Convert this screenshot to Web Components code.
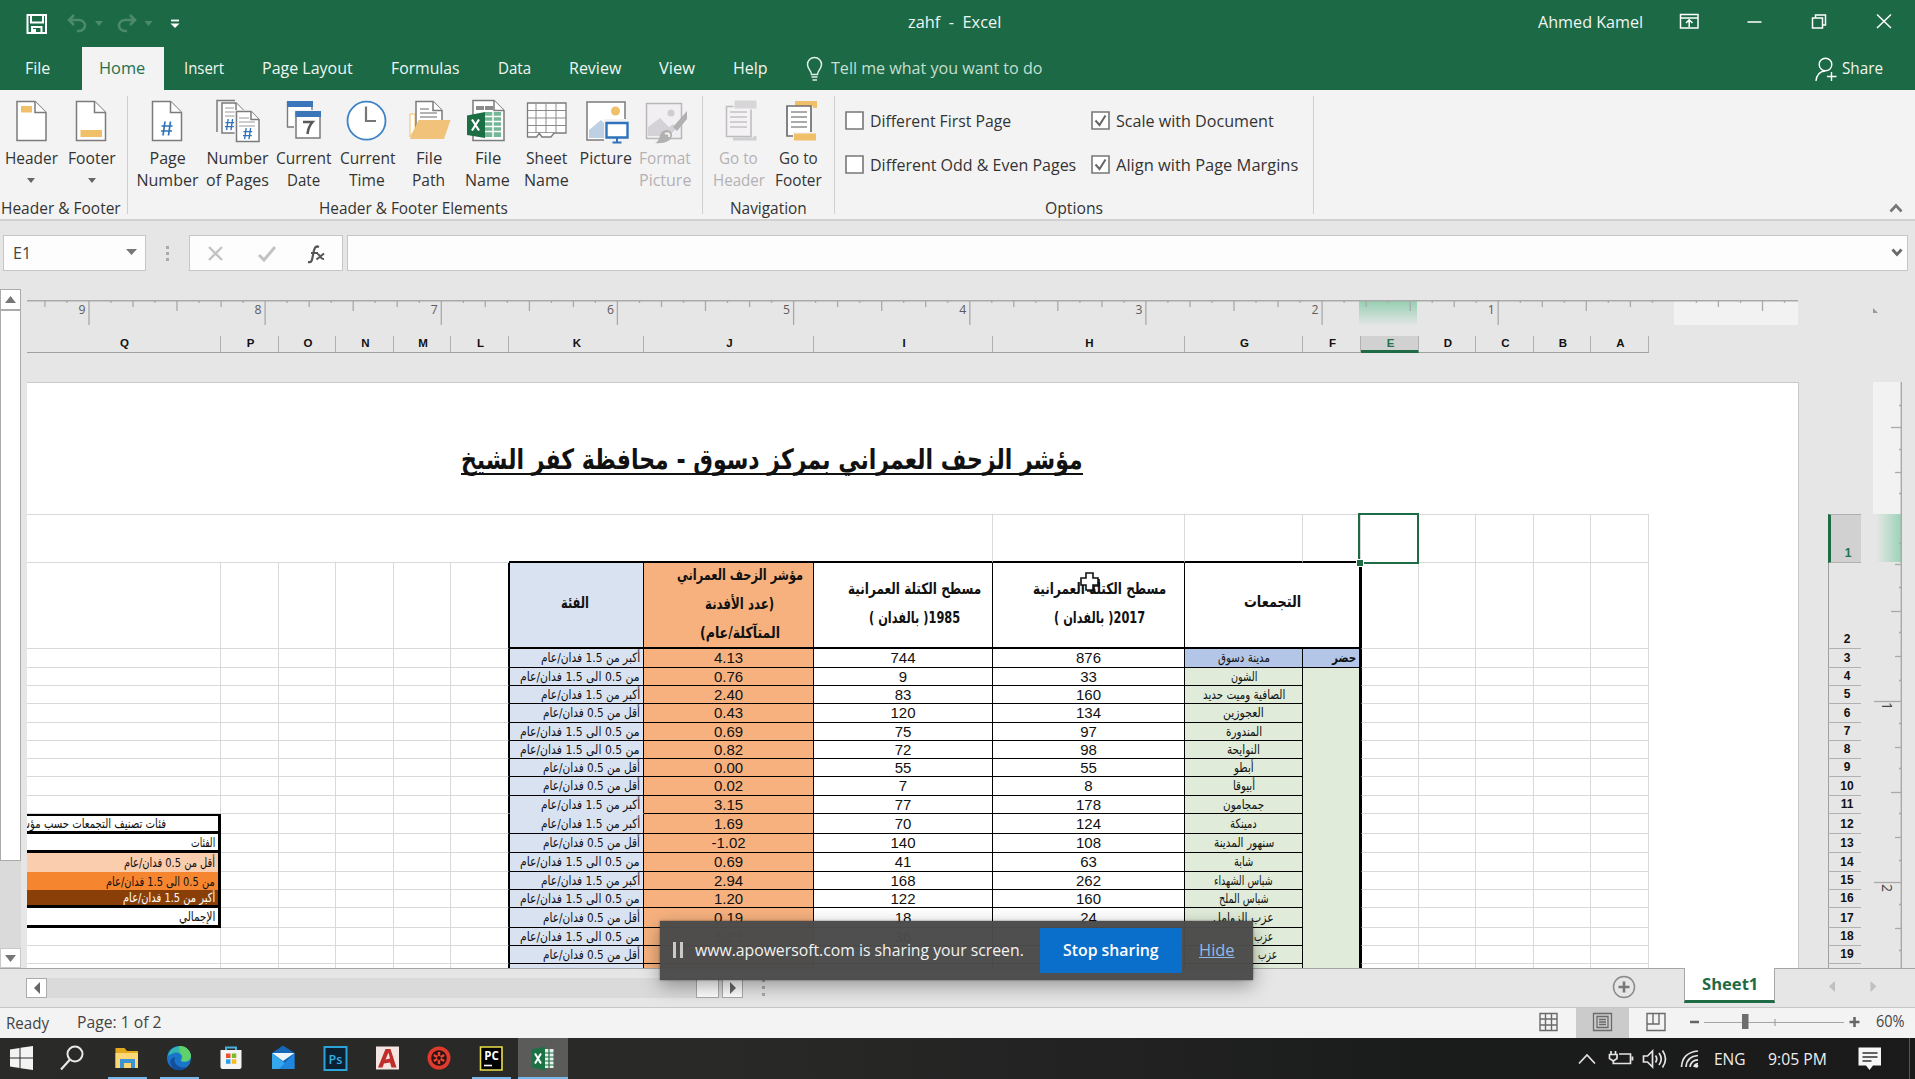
<!DOCTYPE html>
<html lang="en">
<head>
<meta charset="utf-8">
<title>zahf - Excel</title>
<style>
html,body{margin:0;padding:0;width:1915px;height:1079px;overflow:hidden;background:#e6e6e6}
body{font-family:"Open Sans","Noto Sans",sans-serif;font-size:16px;color:#333}
</style>
</head>
<body>
<excel-app></excel-app>
<script>
const define = (name, html) => customElements.define(name, class extends HTMLElement {
  constructor(){ super(); this.attachShadow({mode:'open'}); }
  connectedCallback(){ this.shadowRoot.innerHTML = typeof html === 'function' ? html(this) : html; }
});
const t = (text, w, style='') => `<fit-text w="${w}" style="${style}">${text}</fit-text>`;
const ar = (text, w, style='') => `<fit-text rtl w="${w}" style="${style}">${text}</fit-text>`;

/* text squeezed or stretched to a given advance width */
customElements.define('fit-text', class extends HTMLElement {
  constructor(){
    super();
    this.attachShadow({mode:'open'}).innerHTML = `<style>
      :host{display:inline-block;flex:none;white-space:pre;text-align:left;direction:ltr}
      span{display:inline-block;transform-origin:0 0;text-decoration:inherit}
    </style><span><slot></slot></span>`;
  }
  connectedCallback(){
    const s = this.shadowRoot.querySelector('span'), w = +this.getAttribute('w');
    if (this.hasAttribute('rtl')) s.dir = 'rtl';
    this.style.width = w + 'px';
    const n = s.offsetWidth;
    if (n) s.style.transform = `scaleX(${w / n})`;
  }
});

define('title-bar', `<style>
  :host{display:flex;height:43px;padding-bottom:4px;background:#1c6946;align-items:center;color:#eef5f1}
  svg{flex:none;display:block}
</style>
<svg width="200" height="43" fill="none" stroke="#fff" stroke-width="2">
  <path d="M27.500 15h18.500v18h-18.500z M31 15v7.500h12V15 M32 33v-6h9.500v6"/><path d="M34.500 29v4" stroke-width="3"/>
  <g stroke="#4b8a6b" stroke-width="2.600"><path d="M74 15l-5 5 5 5 M70 20h9a6 5.500 0 0 1 0 11h-2"/><path d="M130 15l5 5-5 5 M134 20h-9a6 5.500 0 0 0 0 11h2"/></g>
  <path d="M95 21h8l-4 5z M144.500 21h8l-4 5z" fill="#4b8a6b" stroke="none"/>
  <path d="M171 20.500h8" stroke-width="1.800"/><path d="M170.500 23.500h9l-4.500 4.500z" fill="#fff" stroke="none"/>
</svg>
${t('zahf  -  Excel',93,'margin-left:708px')}
${t('Ahmed Kamel',105,'margin-left:537px')}
<svg width="272" height="43" fill="none" stroke="#fff" stroke-width="1.500">
  <path d="M37.500 14.500h17.500v13.500h-17.500z M37.500 18h17.500 M46.200 27v-7 M43 23l3.200-3.200L49.500 23"/>
  <path d="M104.500 22h14"/><path d="M169.500 18h10v10h-10z M172.500 18v-3h10v10h-3"/>
  <path d="M234 14.500l14 13.500 M248 14.500l-14 13.500"/>
</svg>`);

define('tab-bar', `<style>
  :host{display:flex;height:43px;background:#1c6946;color:#f0f6f2;align-items:center;line-height:20px}
  fit-text{margin-bottom:1px}
  .on{background:#f3f3f3;color:#24714c;height:43px;display:flex;align-items:center;padding:0 19px 0 17px;margin-left:32px}
  svg{display:block;flex:none}
</style>
${t('File',25,'margin-left:25px')}
<div class="on">${t('Home',46)}</div>
${t('Insert',40,'margin-left:20px')}
${t('Page Layout',91,'margin-left:38px')}
${t('Formulas',69,'margin-left:38px')}
${t('Data',33,'margin-left:38px')}
${t('Review',52,'margin-left:38px')}
${t('View',36,'margin-left:38px')}
${t('Help',35,'margin-left:38px')}
<svg width="18" height="26" viewBox="0 0 18 26" style="margin-left:38px" fill="none" stroke="#e3efe8" stroke-width="1.500"><path d="M5.500 18.500c0-4-4-5.500-4-10a7 7 0 0 1 14 0c0 4.500-4 6-4 10z M5.500 21h6 M6.500 24h4.500"/></svg>
${t('Tell me what you want to do',211,'margin-left:7px;color:#c5dfd1')}
<svg width="24" height="26" viewBox="0 0 24 26" style="margin-left:772px" fill="none" stroke="#fff" stroke-width="1.400"><circle cx="11.500" cy="8.500" r="6.300"/><path d="M2 25c.5-6 4-9.500 9-10 M17.500 16v9 M13 20.500h9.500"/></svg>
${t('Share',41,'margin-left:4px')}`);

const docPath = (x,y,w,h,f=11) => `<path d="M${x} ${y}h${w-f}l${f} ${f}v${h-f}h-${w}z" fill="#fff" stroke="#7b7b7b" stroke-width="1.500"/><path d="M${x+w-f} ${y}v${f}h${f}" fill="#fff" stroke="#7b7b7b" stroke-width="1.500"/>`;
const hash = (x,y,s) => `<g transform="translate(${x} ${y}) scale(${s})" stroke="#2f73bb" stroke-width="1.700" fill="none"><path d="M4 0L2 14 M9.500 0L7.500 14 M.5 4.500h11 M0 9.500h11"/></g>`;
const icons = {
  header: docPath(8,2.500,29,39) + '<path d="M12 7h11v6.500H12z" fill="#f0c068"/>',
  footer: docPath(6.500,2.500,29,39) + '<path d="M10.500 31h21.500v7H10.500z" fill="#f0c068"/>',
  page: docPath(6.500,2.500,29,39) + hash(15,22.500,1),
  pages: '<path d="M1 33V1.500h18" fill="none" stroke="#7b7b7b" stroke-width="1.500"/>' + docPath(6,4,22,30,8) + '<path d="M9 9h9 M9 13h12 M9 17h12" stroke="#9a9a9a"/>' + hash(9,20,.8) + '<path d="M18.500 11h18l8 9v24h-26z" fill="#f3f3f3"/>' + docPath(20.500,12.500,22.500,30,8) + '<path d="M23 19h10 M23 23h16 M23 27h16" stroke="#9a9a9a"/>' + hash(27,29,.8),
  date: '<path d="M5.500 3h24.500v25H5.500z" fill="#fff" stroke="#7b7b7b" stroke-width="1.400"/><path d="M5 2h26v6H5z" fill="#3b76bb"/><path d="M12 11h28v30H12z" fill="#f3f3f3"/><path d="M14 13h24v26H14z" fill="#fff" stroke="#7b7b7b" stroke-width="1.500"/><path d="M13.500 12h25.500v6H13.500z" fill="#3b76bb"/><path d="M21 23h9.500c-3.500 4-4.500 7-5 12" fill="none" stroke="#595959" stroke-width="2.600"/>',
  time: '<circle cx="21.500" cy="21.700" r="19" fill="#fff" stroke="#3f83c7" stroke-width="1.800"/><path d="M21 7.500v14.500h10" fill="none" stroke="#777" stroke-width="2.200"/>',
  path: '<path d="M3 38V15h5v15z" fill="#fff" stroke="#f0c068"/>' + docPath(9,2.500,26,30,9) + '<path d="M13 10h9 M13 14h17 M13 18h17" stroke="#9a9a9a" stroke-width="1.300"/><path d="M11.500 21H43.500L37 40H3z" fill="#f0c27a"/>',
  fname: docPath(7,1.500,31,40,10) + '<path d="M10 7h8v4h-8z M19 7h8v4h-8z" fill="#8b8b8b"/><path d="M19 13h16v25H19z" fill="#74b695"/><path d="M19 17.500h16 M19 22.500h16 M19 27.500h16 M19 32.500h16 M27 12v27" stroke="#fff" stroke-width="1.500"/><path d="M1 16.500L19 13v26L1 36z" fill="#1c6e45"/><path d="M6 20.500l7 11 M13 20.500l-7 11" stroke="#fff" stroke-width="2.200"/>',
  sheet: '<path d="M2.500 4h38.500v30H2.500z" fill="#fff" stroke="#7b7b7b" stroke-width="1.300"/><path d="M2.500 11.500H41 M2.500 19H41 M2.500 26.500H41 M11 4v30 M21 4v30 M31 4v30" stroke="#8b8b8b" fill="none"/><path d="M2.500 34v4h9l3-4 M14 34l3 4h9l3-4" fill="#fff" stroke="#7b7b7b" stroke-width="1.300"/>',
  pict: '<path d="M3 3h38v38H3z" fill="#fff" stroke="#7b7b7b" stroke-width="1.500"/><circle cx="31.500" cy="12" r="4.500" fill="#f0c068"/><path d="M5 39V31L17 21l9 9v9z" fill="#bdd0e4"/><path d="M20 20h26v26H20z" fill="#f3f3f3"/><path d="M22.500 24h21v14.500h-21z" fill="#fff" stroke="#2f73bb" stroke-width="2.400"/><path d="M33 38.500v5 M28.500 43.500h9" stroke="#2f73bb" stroke-width="2"/>',
  fmt: '<path d="M3.500 4.500h35v35h-35z" fill="#f1eff2" stroke="#b9b7ba" stroke-width="1.500"/><circle cx="28" cy="14" r="3.500" fill="#cfcdd0"/><path d="M5 37V28l12-9 9 9 4-3 4 4-8 8z" fill="#d4d2d6"/><path d="M44 12v8L34 32l-4-4z" fill="#b1b1b1"/><path d="M12 44c4-1 4-6 6-10 4-5 11-3 11 2 0 6-8 9-17 8z" fill="#b1b1b1"/><path d="M22 35c3-2 5 0 4 3" stroke="#f3f3f3" stroke-width="2" fill="none"/>',
  goh: '<path d="M16 40h22V37" stroke="#d0ced1" stroke-width="3" fill="none"/><path d="M9.500 7.500H34v30H9.500z" fill="#f4f2f5" stroke="#bdbbbe" stroke-width="1.500"/><path d="M17 1h23v9H17z" fill="#d8d6d9" stroke="#f3f3f3"/><path d="M13 13h17 M13 18h17 M13 23h17 M13 28h17" stroke="#c4c2c5" stroke-width="1.300"/>',
  gof: '<path d="M18 2h22v7h-4v-2H18z" fill="#f0c068"/><path d="M10 7h24v30H10z" fill="#fff" stroke="#6e6e6e" stroke-width="1.700"/><path d="M14 13h16 M14 18h16 M14 23h16 M14 28h16" stroke="#8f8f8f" stroke-width="1.300"/><path d="M16 33h24v9H16z" fill="#f3f3f3"/><path d="M17 34.500h22v7H17z" fill="#f0c068"/>'
};
define('ribbon-button', el => `<style>
  :host{display:flex;flex-direction:column;align-items:center;box-sizing:border-box;padding-top:9px;flex:none;line-height:22.700px;color:#333}
  :host([off]){color:#b3b1b4}
  svg{display:block;overflow:visible;margin-bottom:3.500px;flex:none}
  .a{width:0;height:0;border:4.500px solid transparent;border-top:5px solid #666;margin-top:9px}
</style><svg width="44" height="44" fill="none">${icons[el.getAttribute('icon')]}</svg><slot></slot>${el.hasAttribute('menu')?'<i class="a"></i>':''}`);
define('check-box', el => `<style>
  :host{display:flex;align-items:center;height:19px;gap:6px}
  svg{display:block;flex:none}
</style><svg width="19" height="19" fill="none"><path d="M1 1h17v17H1z" fill="#fff" stroke="#777" stroke-width="1.600"/>${el.hasAttribute('on')?'<path d="M4.500 9.500l4 4.500 6-9.500" stroke="#666" stroke-width="2"/>':''}</svg><slot></slot>`);

const btn = (icon,w,lines,attr='') => `<ribbon-button icon="${icon}" style="width:${w}px" ${attr}>${lines.map(l=>t(l[0],l[1])).join('')}</ribbon-button>`;
define('ribbon-bar', `<style>
  :host{display:flex;height:129px;background:#f3f3f3;border-bottom:2px solid #d2d2d2;color:#333}
  .g{display:flex;flex-direction:column;flex:none}
  .b{display:flex;height:106.500px}
  .l{line-height:22px;text-align:center;height:22px}
  .s{width:1px;height:118px;margin-top:6px;background:#cfcfcf;flex:none}
  .o{display:grid;grid-template-columns:246px auto;row-gap:25px;align-content:start;height:85.500px;padding:21px 0 0 10px}
  .c{margin:112px 0 0 574px;display:block}
</style>
<div class="g" style="width:127px"><div class="b">${btn('header',62,[['Header',53]],'menu')}${btn('footer',60,[['Footer',48]],'menu')}</div><div class="l" style="text-align:left;padding-left:1px">${t('Header &amp; Footer',120)}</div></div>
<div class="s"></div>
<div class="g" style="width:574px"><div class="b" style="padding-left:5px">
${btn('page',69,[['Page',36],['Number',62]])}${btn('pages',71,[['Number',62],['of Pages',63]])}${btn('date',61,[['Current',55],['Date',33]])}${btn('time',66,[['Current',55],['Time',36]])}${btn('path',57,[['File',26],['Path',33]])}${btn('fname',61,[['File',26],['Name',45]])}${btn('sheet',57,[['Sheet',41],['Name',45]])}${btn('pict',61,[['Picture',52]])}${btn('fmt',58,[['Format',52],['Picture',52]],'off')}
</div><div class="l" style="text-align:left;padding-left:191px">${t('Header &amp; Footer Elements',189)}</div></div>
<div class="s"></div>
<div class="g" style="width:131px"><div class="b" style="padding-left:5px">${btn('goh',61,[['Go to',39],['Header',52]],'off')}${btn('gof',59,[['Go to',39],['Footer',47]])}</div><div class="l">${t('Navigation',77)}</div></div>
<div class="s"></div>
<div class="g" style="width:478px"><div class="o">
<check-box>${t('Different First Page',141)}</check-box><check-box on>${t('Scale with Document',158)}</check-box>
<check-box>${t('Different Odd &amp; Even Pages',206)}</check-box><check-box on>${t('Align with Page Margins',182)}</check-box>
</div><div class="l">${t('Options',58)}</div></div>
<div class="s"></div>
<svg class="c" width="16" height="14" fill="none"><path d="M2.500 9.500L8 3.500l5.500 6" stroke="#777" stroke-width="2.600"/></svg>`);

define('formula-row', `<style>
  :host{display:flex;height:46px;padding:14px 0 0 3px;background:#e6e6e6;align-items:flex-start}
  div{box-sizing:border-box;height:36px;background:#fdfdfd;border:1.500px solid #c6c6c6;display:flex;align-items:center;flex:none}
  svg{display:block;flex:none}
</style>
<div style="width:143px;padding:0 8px 0 9px;justify-content:space-between">${t('E1',18,'color:#444')}<svg width="11" height="6" style="margin-bottom:3px"><path d="M0 0h11L5.500 6z" fill="#777"/></svg></div>
<svg width="43" height="36"><path d="M20 11h3v3h-3z M20 17h3v3h-3z M20 23h3v3h-3z" fill="#aaa"/></svg>
<div style="width:154px"><svg width="151" height="34" fill="none"><path d="M19 11l13 13 M32 11L19 24" stroke="#c3c3c3" stroke-width="2.400"/><path d="M69 19l5 5L85 11" stroke="#c3c3c3" stroke-width="3"/><path d="M118 26c4 1 4-2 5-7 1-6 2-10 6-8 M121 17h7" stroke="#555" stroke-width="2.200"/><path d="M127 18c3-1 3 6 7 5 M134 17.500l-7.500 6" stroke="#555" stroke-width="2"/></svg></div>
<div style="width:1561px;margin-left:4px;justify-content:flex-end;padding-right:3px"><svg width="14" height="12" fill="none"><path d="M2.500 2.500L7 7.500l4.500-5" stroke="#6a6a6a" stroke-width="2.800"/></svg></div>`);

define('scroll-v', `<style>
  :host{display:flex;flex-direction:column;width:21px;flex:none;padding-top:8px;height:679px;background:linear-gradient(#e6e6e6 8px,#dadada 8px)}
  div{box-sizing:border-box;border:1px solid #ababab;background:#fff;flex:none;display:grid;place-items:center}
  svg{display:block}
</style>
<div style="height:21px"><svg width="11" height="7"><path d="M0 7h11L5.500 0z" fill="#777"/></svg></div>
<div style="height:551px"></div>
<div style="height:20px;margin-top:87px;border-color:#c8c8c8"><svg width="11" height="7"><path d="M0 0h11L5.500 7z" fill="#777"/></svg></div>`);

const X0 = 27;
const hRuler = (() => {
  let s = '';
  const tick = (x,h) => s += `<path d="M${(x-X0).toFixed(1)} 20v${h}" stroke="#a9a9a9" stroke-width="1.300"/>`;
  for (let i=-5;i<=75;i++){
    const x = 1674.400 - i*22.020;
    if (x < 30 || x > 1796 || i===0) continue;
    const m = ((i%8)+8)%8;
    tick(x, m===0?24 : m===4?10 : m%2===0?6 : 2);
    if (m===0) s += `<text x="${x-X0-10.500}" y="32.500" textLength="7" lengthAdjust="spacingAndGlyphs">${i/8}</text>`;
  }
  return s;
})();
define('h-ruler', `<style>
  :host{display:block;height:55px;flex:none}
  svg{display:block}
  text{fill:#5c5c5c;font:13px "Open Sans",sans-serif}
</style><svg width="1888" height="55">
<defs><linearGradient id="g" x1="0" y1="0" x2="0" y2="1"><stop offset="0" stop-color="#95cfb1"/><stop offset="1" stop-color="#e6e6e6"/></linearGradient></defs>
<path d="M1647 20h124v24h-124z" fill="#f2f2f2"/><path d="M1332 20h58v25h-58z" fill="url(#g)"/>
<path d="M0 19.700h1771" stroke="#a9a9a9" stroke-width="1.400"/>${hRuler}
<path d="M1846 27v5h5z" fill="#999"/></svg>`);

const cols = [['Q',194],['P',58],['O',57],['N',58],['M',57],['L',58],['K',135],['J',170],['I',179],['H',192],['G',118],['F',58],['E',58],['D',57],['C',58],['B',57],['A',58]];
define('col-heads', `<style>
  :host{display:flex;height:17px;flex:none;font:bold 11.500px "Liberation Sans",sans-serif;color:#111}
  div{box-sizing:border-box;flex:none;text-align:center;line-height:15px;height:17px;border-bottom:1.500px solid #a0a0a0;border-right:1px solid #b0b0b0;padding-left:2px}
  .e{background:#d1d1d1;border-bottom:3px solid #1f6b46;color:#24714c}
</style>${cols.map(c=>`<div class="${c[0]==='E'?'e':''}" style="width:${c[1]}px">${c[0]}</div>`).join('')}`);

const rowH = [48,86,19,18,18,19,18,18,18,19,18,20,19,19,18,18,20,18,18,5];
const A = 'أكبر من 1.5 فدان/عام', B = 'من 0.5 الى 1.5 فدان/عام', C = 'أقل من 0.5 فدان/عام';
const W = {[A]:99,[B]:120,[C]:97};
const data = [
 ['876','744','4.13',A,'مدينة دسوق',52],['33','9','0.76',B,'الشون',26],['160','83','2.40',A,'الصافية وميت حديد',82],
 ['134','120','0.43',C,'العجوزين',41],['97','75','0.69',B,'المندورة',36],['98','72','0.82',B,'النوايحة',33],
 ['55','55','0.00',C,'أبطو',20],['8','7','0.02',C,'أبيوقا',22],['178','77','3.15',A,'جمجامون',41],
 ['124','70','1.69',A,'دمينكة',27],['108','140','-1.02',C,'سنهور المدينة',60],['63','41','0.69',B,'شابة',19],
 ['262','168','2.94',A,'شباس الشهداء',59],['160','122','1.20',B,'شباس الملح',50],['24','18','0.19',C,'عزب الزوامل',61],
 ['75','36','1.23',B,'عزب',19],['','','',C,'عزب',19],['','','','','',0]];
const grid = (() => {
  let s = '';
  const cell = (c1,c2,r1,r2,cls,html='',st='') => s += `<div class="${cls}" style="grid-area:${r1}/${c1}/${r2}/${c2};${st}">${html}</div>`;
  cell(1,7,1,2,'','','border-right:0'); cell(7,10,1,2,'tb');
  cell(10,11,1,2,'tb'); cell(11,12,1,2,'tb'); cell(12,13,1,2,'tb');
  for (let c=13;c<=17;c++) cell(c,c+1,1,2,'');
  for (let r=2;r<=20;r++){
    if (!(r>=12 && r<=17)) cell(1,2,r,r+1,'');
    for (let c=2;c<=6;c++) cell(c,c+1,r,r+1,'','',(c===6?'border-right-color:#000;':''));
    for (let c=13;c<=17;c++) cell(c,c+1,r,r+1,'','',(c===13?'border-left:1px solid #000':''));
  }
  /* table heading */
  cell(7,8,2,3,'k h',ar('الفئة',28),'background:#d9e2f1;border-left:1px solid #000;padding:0 3px 4px 0');
  cell(8,9,2,3,'k h',ar('مؤشر الزحف العمراني',126)+ar('(عدد الأفدنة',69)+ar('المتآكلة/عام)',80),'background:#f6b17e;padding:0 0 1px 22px');
  cell(9,10,2,3,'k h',ar('مسطح الكتلة العمرانية',133)+ar('1985( بالفدان )',91),'padding:0 0 2px 22px');
  cell(10,11,2,3,'k h',ar('مسطح الكتلة العمرانية',133)+ar('2017( بالفدان )',91),'padding:0 0 2px 22px');
  cell(11,13,2,3,'k h',ar('التجمعات',57),'border-right-width:2px;padding-bottom:6px');
  data.forEach((d,i)=>{
    const r = i+3;
    cell(7,8,r,r+1,'k r',d[3]?ar(d[3],W[d[3]]):'','background:#d9e2f1;border-left:1px solid #000;'+(r===11?'border-bottom-color:#d9e2f1':''));
    cell(8,9,r,r+1,'k n',d[2],'background:#f6b17e');
    cell(9,10,r,r+1,'k n',d[1]);
    cell(10,11,r,r+1,'k n',d[0]);
    cell(11,12,r,r+1,'k',d[4]?ar(d[4],d[5]):'','background:'+(r===3?'#b4c6e7':'#e0ecd9')+(r>=18?';justify-content:flex-end;padding-right:'+(r===18?29:25)+'px':''));
  });
  cell(12,13,3,4,'k r',ar('حضر',24,'font-weight:bold'),'background:#b4c6e7;border-right-width:2px;padding-right:3px');
  cell(12,13,4,21,'k','','background:#e0ecd9;border-right-width:2px');
  /* legend */
  const L = 'padding-right:3px;border-right:3px solid #000;';
  cell(1,2,12,13,'r q',ar('فئات تصنيف التجمعات حسب مؤشر',150),L+'border-top:2px solid #000;padding-right:52px');
  cell(1,2,13,14,'r q',ar('الفئات',24),L);
  cell(1,2,14,15,'r q',ar(C,91),L+'background:#f9cdad;border-bottom:0');
  cell(1,2,15,16,'r q',ar(B,109),L+'background:#f5862f;border-bottom:0');
  cell(1,2,16,17,'r q',ar(A,92),L+'background:#8a3f08;color:#fff');
  cell(1,2,17,18,'r q',ar('الإجمالي',36),L);
  return s;
})();
define('sheet-page', `<style>
  :host{display:flex;flex-direction:column;width:1772px;flex:none;height:586px;background:#fff;border-top:1px solid #c9c9c9;border-right:1px solid #c9c9c9;overflow:hidden;box-sizing:border-box;position:relative}
  .t{height:132px;box-sizing:border-box;padding:63px 0 0 434px;font:bold 28px/27px "DejaVu Sans",sans-serif;color:#111;border-bottom:1px solid #d9d9d9;width:1622px;flex:none}
  .u{width:622px;height:27px;border-bottom:2px solid #111;overflow:visible}
  .g{display:grid;flex:none;grid-template-columns:${cols.map(c=>c[1]+'px').join(' ')};grid-template-rows:${rowH.map(h=>h+'px').join(' ')};font:13px "Liberation Sans","DejaVu Sans",sans-serif;color:#111}
  .g div{box-sizing:border-box;border:0 solid #d9d9d9;border-right-width:1px;border-bottom-width:1px;min-width:0;min-height:0;display:flex;align-items:center;justify-content:center;overflow:hidden;line-height:17px}
  .g .tb{border-bottom:2px solid #000}
  .g .k{border-color:#000;font-family:"DejaVu Sans",sans-serif;font-size:13px;line-height:16px}
  .g .n{font:15px/16px "Liberation Sans",sans-serif}
  .g .r{justify-content:flex-end;padding-right:3px}
  .g .h{flex-direction:column;font:bold 15.500px/29px "DejaVu Sans",sans-serif;border-bottom:2px solid #000}
  .g .q{border-bottom:3px solid #000;font:13px/15px "DejaVu Sans",sans-serif}
  .sel{position:absolute;left:1331px;top:130px;width:61px;height:51px;box-sizing:border-box;border:2px solid #1f6b46}
  .hd{position:absolute;left:1329px;top:176px;width:6px;height:6px;background:#1f6b46;border:1px solid #fff}
  .cur{position:absolute;left:1051px;top:187px}
</style>
<div class="t"><div class="u">${ar('مؤشر الزحف العمراني بمركز دسوق - محافظة كفر الشيخ',622)}</div></div>
<div class="g">${grid}</div>
<i class="sel"></i><i class="hd"></i>
<svg class="cur" width="23" height="23"><path d="M8 3h7v5h5v7h-5v5H8v-5H3V8h5z" fill="#fff" stroke="#111" stroke-width="1.600"/><path d="M9 21h7v-5h5V9" fill="none" stroke="#111" stroke-width="1.600"/></svg>`);

define('row-heads', `<style>
  :host{display:flex;flex-direction:column;width:33px;flex:none;margin:132px 0 0 29px;height:454px;overflow:hidden;font:bold 12px "Liberation Sans",sans-serif;color:#111;box-sizing:border-box}
  div{box-sizing:border-box;flex:none;border-left:1.500px solid #a0a0a0;border-bottom:1px solid #b0b0b0;display:flex;align-items:flex-end;justify-content:center;line-height:15px;padding:0 0 1px 4px}
  .e{background:#d1d1d1;border-left:3px solid #1f6b46;border-top:1px solid #b0b0b0;color:#24714c}
</style>${rowH.map((h,i)=>`<div class="${i?'':'e'}" style="height:${i?h:49}px">${i<19?i+1:''}</div>`).join('')}`);

const vTicks = [[405,'e'],[427,'h'],[449,'e'],[472,'q'],[493,'e'],[543,'e'],[564,'q'],[587,'e'],[611,'h'],[632,'e'],[656,'q'],[680,'e'],[701,'M'],[723,'e'],[747,'q'],[768,'e'],[792,'h'],[813,'e'],[837,'q'],[860,'e'],[882,'M'],[904,'e'],[928,'q'],[950,'e']];
define('v-ruler', `<style>
  :host{display:block;flex:none;margin-left:12px;width:42px}
  svg{display:block} text{font:14px "Open Sans",sans-serif;fill:#444}
</style><svg width="42" height="586"><defs><linearGradient id="g"><stop offset="0" stop-color="#e6e6e6"/><stop offset="1" stop-color="#9dd3b8"/></linearGradient></defs>
<path d="M0 0h28v132H0z" fill="#f2f2f2"/><path d="M3 132h25v48H3z" fill="url(#g)"/><path d="M28.300 0v586" stroke="#a9a9a9" stroke-width="1.400"/>
${vTicks.map(([y,k])=>`<path d="M28 ${y-381.500}h-${{e:2,q:6,h:10,M:27}[k]}" stroke="#a9a9a9" stroke-width="1.300"/>`).join('')}
<text transform="translate(9 320) rotate(90)">1</text><text transform="translate(9 502) rotate(90)">2</text></svg>`);

define('work-area', `<style>
  :host{display:flex;height:687px;background:#e6e6e6;flex:none}
  .m{display:flex;flex-direction:column;margin-left:6px;width:1888px}
  .b{display:flex;margin-top:29px;height:586px}
</style><scroll-v></scroll-v><div class="m"><h-ruler></h-ruler><col-heads></col-heads><div class="b"><sheet-page></sheet-page><row-heads></row-heads><v-ruler></v-ruler></div></div>`);

define('sheet-tabs', `<style>
  :host{display:flex;height:38px;border-top:1px solid #a6a6a6;background:#e6e6e6;border-bottom:1px solid #c6c6c6;flex:none}
  .s{display:flex;background:#dadada;width:717px;height:20px;margin:9px 0 0 26px;justify-content:space-between}
  .b{box-sizing:border-box;border:1px solid #ababab;background:#fff;height:20px;display:grid;place-items:center;width:21px}
  svg{display:block;flex:none}
  .t{box-sizing:border-box;width:91px;height:35px;margin-top:-1px;background:#fff;border:solid #a6a6a6;border-width:0 1px;border-bottom:3px solid #1f6b46;color:#1f6b46;font-weight:bold;display:flex;justify-content:center;align-items:center;line-height:20px}
</style>
<div class="s"><div class="b"><svg width="6" height="12"><path d="M6 0v12L0 6z" fill="#666"/></svg></div><div style="display:flex;gap:3px"><div class="b" style="width:23px"></div><div class="b"><svg width="6" height="12"><path d="M0 0v12l6-6z" fill="#666"/></svg></div></div></div>
<svg width="40" height="38"><path d="M19 10h3v3h-3z M19 17h3v3h-3z M19 24h3v3h-3z" fill="#aaa"/></svg>
<svg width="30" height="38" style="margin-left:826px" fill="none"><circle cx="15" cy="18" r="10.500" stroke="#8a8a8a" stroke-width="1.500"/><path d="M15 12.500v11 M9.500 18h11" stroke="#777" stroke-width="2.600"/></svg>
<div class="t" style="margin-left:45px">${t('Sheet1',56)}</div>
<svg width="130" height="38"><path d="M60 12v11l-6-5.500z M95.500 12v11l6-5.500z" fill="#c0c0c0"/></svg>`);

define('status-bar', `<style>
  :host{display:flex;height:30px;background:#f3f3f3;color:#444;align-items:center;font-size:15.500px;flex:none;line-height:26px}
  svg{display:block;flex:none}
</style>
${t('Ready',43,'margin-left:6px')}${t('Page: 1 of 2',84,'margin-left:28px;margin-bottom:3px')}
<svg width="340" height="30" style="margin-left:1369px" fill="none"><path d="M46 0h53v30H46z" fill="#cbcbcb"/>
<path d="M10 5.500h17v17H10z M10 11h17 M10 17h17 M15.500 5.500v17 M21.500 5.500v17" stroke="#6a6a6a" stroke-width="1.400"/>
<path d="M63.500 5.500h18v17h-18z M67 8.500h11v11H67z M69 11.500h7 M69 14h7 M69 16.500h7" stroke="#6a6a6a" stroke-width="1.300"/>
<path d="M117 5.500h18v17h-18z M117 16h12V5.500 M123 5.500v10" stroke="#6a6a6a" stroke-width="1.400"/>
<path d="M160 14h9 M319.500 14h10 M324.500 9v10" stroke="#666" stroke-width="2.600"/><path d="M174 14.500h140 M245 11v7" stroke="#a5a5a5" stroke-width="1.200"/><path d="M212 6h6.500v15H212z" fill="#6e6e6e"/></svg>
${t('60%',29,'margin-left:6px;margin-bottom:5px')}`);

const tb = (w,svg,cls='') => `<div class="i ${cls}" style="width:${w}px"><svg width="28" height="28" viewBox="0 0 28 28" fill="none">${svg}</svg></div>`;
define('task-bar', `<style>
  :host{display:flex;height:41px;background:linear-gradient(90deg,#2a2a28,#282827 40%,#1a1c1b 75%,#1a1a1a);color:#eee;align-items:center;flex:none}
  .i{height:41px;display:grid;place-items:center;flex:none;box-sizing:border-box;padding-bottom:1px}
  svg{display:block;flex:none}
  .o{border-bottom:2.500px solid #76b9ed;padding:1px 0 0;margin:0 6.500px}
  .x{background:#5b5b5a;margin:0 0 0 1px}
</style>
<div style="display:flex;width:1569px">
${tb(42,'<path d="M3 5.500l9.500-1.500v9.500H3z M13.500 3.800L26 2v11.500H13.500z M3 14.500h9.500V24L3 22.500z M13.500 14.500H26V26l-12.500-1.800z" fill="#f3f3f3"/>')}
${tb(59,'<circle cx="17" cy="10" r="7.500" stroke="#e8e8e8" stroke-width="2"/><path d="M12 15.500L3 25.500" stroke="#e8e8e8" stroke-width="2.200"/>')}
${tb(39,'<path d="M2.500 4h9l2.500 3h11v17h-22.500z" fill="#e5a920"/><path d="M2.500 9h22.500v15h-22.500z" fill="#fbd776"/><path d="M7 24v-9h15v9h-4v-5h-7v5z" fill="#3e92d6"/>','o')}
${tb(39,'<circle cx="14" cy="14" r="12" fill="#1a75c9"/><path d="M3 12C5 3 14 0 21 4c6 4 6 11 2 13-3 2-8 1-7-1 3-4-2-9-7-7-3 1-5 2-6 3z" fill="#35b5b0"/><path d="M14 2c8-1 12 6 12 10 0 5-6 7-10 4 2-2 2-5-1-7z" fill="#5fd06a"/><path d="M10 13c-2 6 3 12 12 10-5 5-14 4-16-2-2-4 0-7 4-8z" fill="#144f9e"/>','o')}
${tb(52,'<path d="M9 7V3.500h10V7" stroke="#47b0dc" stroke-width="2"/><path d="M3.500 6h21v17q0 2-2 2h-17q-2 0-2-2z" fill="#f5f5f5"/><path d="M9 9.500h4.500V14H9z" fill="#e8542e"/><path d="M14.800 9.500h4.500V14h-4.500z" fill="#7dbb2b"/><path d="M9 15.300h4.500v4.500H9z" fill="#2ba0e8"/><path d="M14.800 15.300h4.500v4.500h-4.500z" fill="#f7b823"/>')}
${tb(52,'<path d="M3 9L14 1.500 25.500 9v16H3z" fill="#1567b8"/><path d="M3 9h22.500L14 17z" fill="#eef6fb"/><path d="M3 9l14 11-3 5H3z" fill="#35a7ee"/><path d="M25.500 9L10 25h15.500z" fill="#2186dd"/>')}
${tb(52,'<path d="M3.500 3h22v23h-22z" fill="#0c2030" stroke="#2ba3d8" stroke-width="2"/><text x="14.500" y="19.500" text-anchor="middle" font-family="Open Sans,sans-serif" font-size="12.500" font-weight="600" fill="#2fb0e8">Ps</text>')}
${tb(52,'<path d="M3 2.500h23v23H3z" fill="#f3e5e1"/><path d="M5 23.500L12.500 5h5l6 18.500h-5l-1.500-5-6 1-1.500 4z" fill="#bf2e2a"/><path d="M12.500 15.500l3-7 1.500 6z" fill="#f3e5e1"/>')}
${tb(52,'<circle cx="14" cy="14" r="11.500" fill="#e03a2c"/><circle cx="14" cy="14" r="7.800" fill="#2b1412"/><path d="M14 8v12 M8.800 11l10.400 6 M19.200 11l-10.400 6" stroke="#ee4436" stroke-width="2.400"/><circle cx="14" cy="14" r="2" fill="#2b1412"/>')}
${tb(39,'<path d="M3.500 3h21.500v23H3.500z" fill="#000" stroke="#e9e04a" stroke-width="1.600"/><text x="14.500" y="16" text-anchor="middle" font-family="Open Sans,sans-serif" font-weight="bold" font-size="11.500" fill="#fff">PC</text><path d="M7 21.500h8" stroke="#fff" stroke-width="1.600"/>','o')}
${tb(50,'<path d="M14 5h10.500v19H14z" fill="#e6efe9"/><path d="M15 9h10 M15 13h10 M15 17h10 M15 21h10 M20 5v19" stroke="#1c6e45" stroke-width="1.200"/><path d="M2.500 5.500L16 2.500v24l-13.500-3z" fill="#1c7245"/><path d="M6 9.500l6 10 M12 9.500l-6 10" stroke="#fff" stroke-width="2"/>','o x')}
</div>
<svg width="142" height="41" fill="none" stroke="#e4e4e4" stroke-width="1.700"><path d="M10 25.500l8-8.500 8 8.500"/>
<path d="M50 16h11.500v9.500H50 M63.500 18.500v4 M42 13v3 M46.500 13v3 M40.500 16.500h7.500v4l-3.700 2.500-3.800-2.500z M44.300 23v2.500h6"/>
<path d="M74.500 18h4l5-5v16l-5-5h-4z M86.500 17.500q2.500 3.500 0 7 M90 15q4.500 6 0 12 M93.500 12.500q6 8.500 0 17"/>
<g transform="translate(112 11)"><path d="M.5 18C1 8 7 3 17 2 M5 18C5.500 11 10 7 17 6.500 M9 18c.5-4 3-7 8-7.200 M13 18q.5-3 4-3.500"/><circle cx="15.500" cy="17" r="1.800" fill="#eee" stroke="none"/></g></svg>
${t('ENG',32,'margin-left:3px')}${t('9:05 PM',59,'margin-left:22px')}
<svg width="86" height="41" fill="none"><path d="M31.500 9.500h22.500v18h-8l-3.500 4.500-3.500-4.500h-7.500z" fill="#f7f7f7"/><path d="M35.500 15h15 M35.500 19h15 M35.500 23h9" stroke="#333" stroke-width="1.500"/><path d="M82.500 0v41" stroke="#555"/></svg>`);

define('share-toast', `<style>
  :host{position:absolute;left:660px;top:921px;width:593px;height:59px;box-sizing:border-box;background:rgba(75,75,75,.975);box-shadow:0 6px 18px rgba(0,0,0,.35),0 0 2px rgba(0,0,0,.5);display:flex;align-items:center;color:#f2f2f2;padding:0 0 1px 13px;line-height:22px}
  .p{display:flex;gap:4px} .p i{width:3px;height:16px;background:#c9c9c9}
  .b{width:142px;height:45px;background:#0a6ecb;display:grid;place-items:center;color:#fff;font-weight:600;margin-left:16px}
</style><div class="p"><i></i><i></i></div>${t('www.apowersoft.com is sharing your screen.',329,'margin-left:12px')}
<div class="b">${t('Stop sharing',96)}</div>${t('<u>Hide</u>',36,'margin-left:17px;color:#8db8e8')}`);

define('excel-app', `<style>
  :host{display:flex;flex-direction:column;width:1915px;height:1079px;overflow:hidden;position:relative}
</style><title-bar></title-bar><tab-bar></tab-bar><ribbon-bar></ribbon-bar><formula-row></formula-row><work-area></work-area><sheet-tabs></sheet-tabs><status-bar></status-bar><task-bar></task-bar><share-toast></share-toast>`);
</script>
</body>
</html>
